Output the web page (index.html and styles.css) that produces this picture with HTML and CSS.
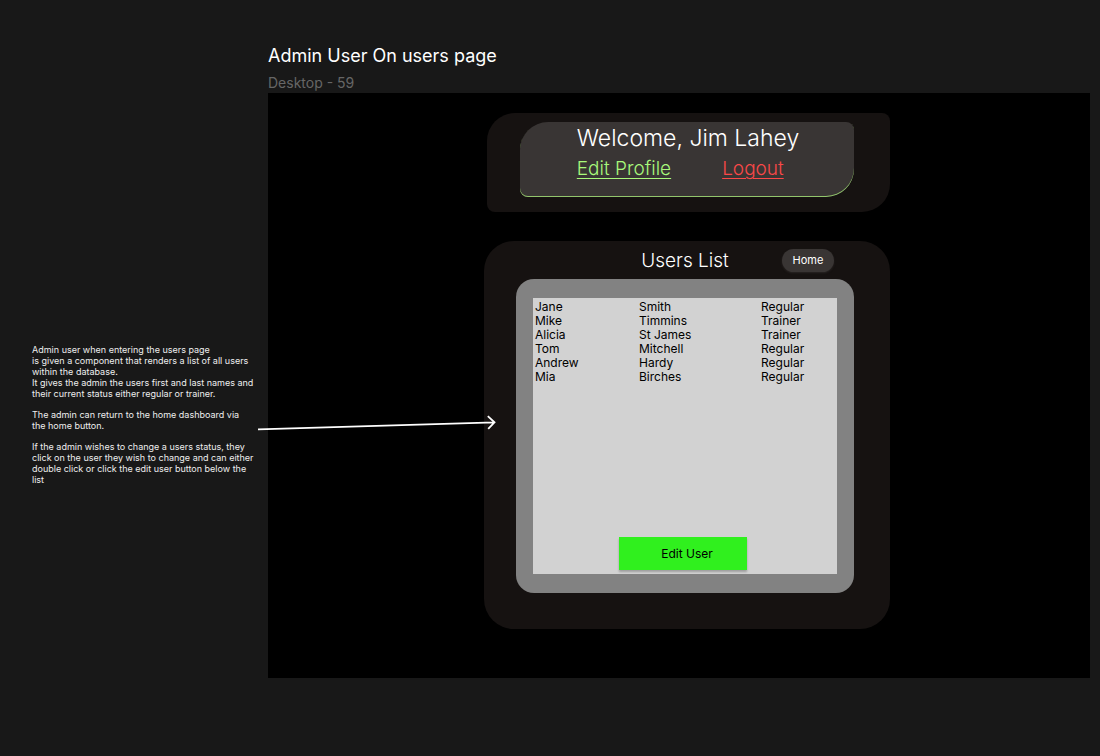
FILE: index.html
```html
<!DOCTYPE html>
<html lang="en">
<head>
<meta charset="utf-8">
<title>Admin User On users page</title>
<link rel="stylesheet" href="styles.css">
</head>
<body>
<div class="board">
  <aside class="notes">
    <p>Admin user when entering the users page<br>is given a component that renders a list of all users within the database.<br>It gives the admin the users first and last names and their current status either regular or trainer.</p>
    <p>The admin can return to the home dashboard via<br>the home button.</p>
    <p>If the admin wishes to change a users status, they click on the user they wish to change and can either double click or click the edit user button below the list</p>
  </aside>
  <main class="artboard">
    <h1 class="title">Admin User On users page</h1>
    <p class="frame-name">Desktop - 59</p>
    <div class="frame">
      <div class="stack">
        <header class="welcome">
          <div class="welcome-card">
            <div class="welcome-text">
              <h2 class="greeting">Welcome, Jim Lahey</h2>
              <nav class="links">
                <a class="link edit" href="#profile">Edit Profile</a>
                <a class="link logout" href="#logout">Logout</a>
              </nav>
            </div>
          </div>
        </header>
        <section class="panel">
          <div class="panel-head">
            <h2 class="panel-title">Users List</h2>
            <button class="home" type="button">Home</button>
          </div>
          <div class="list-border">
            <div class="list">
              <table class="users">
                <tbody>
                  <tr><td class="first">Jane</td><td class="last">Smith</td><td>Regular</td></tr>
                  <tr><td>Mike</td><td>Timmins</td><td>Trainer</td></tr>
                  <tr><td>Alicia</td><td>St James</td><td>Trainer</td></tr>
                  <tr><td>Tom</td><td>Mitchell</td><td>Regular</td></tr>
                  <tr><td>Andrew</td><td>Hardy</td><td>Regular</td></tr>
                  <tr><td>Mia</td><td>Birches</td><td>Regular</td></tr>
                </tbody>
              </table>
              <button class="edit-user" type="button">Edit User</button>
            </div>
          </div>
        </section>
      </div>
      <svg class="arrow" width="240" height="20" viewBox="0 0 240 20" fill="none" stroke="#fff" stroke-width="1.8" aria-hidden="true">
        <path d="M0 14.3L236.5 7.3M229.8 1.2L236.5 7.3L230.2 13.8"/>
      </svg>
    </div>
  </main>
</div>
</body>
</html>
```

FILE: styles.css
```css
* {
  box-sizing: border-box;
}

body {
  margin: 0;
  background: #181818;
  color: #fff;
  font-family: Inter, "Liberation Sans", sans-serif;
}

h1, h2, p {
  margin: 0;
  font-weight: 400;
}

button {
  border: 0;
  padding: 0;
  font: inherit;
  font-size: 12px;
}

.board {
  display: grid;
  grid-template-columns: 268px 1fr;
  min-height: 100vh;
  padding-right: 10px;
}

.notes {
  display: flex;
  flex-direction: column;
  gap: 10px;
  padding: 344px 8px 0 32px;
  color: #eee;
  font-size: 9px;
  line-height: 11px;
}

.artboard {
  padding: 44px 0 78px;
}

.title {
  font-size: 18px;
  line-height: 23px;
}

.frame-name {
  margin-top: 6px;
  color: #666;
  font-size: 14px;
  line-height: 20px;
}

.frame {
  position: relative;
  display: flex;
  justify-content: center;
  padding: 20px 0 49px 16px;
  background: #000;
}

.stack {
  display: flex;
  flex-direction: column;
  gap: 29px;
  width: 406px;
}

.welcome {
  margin-left: 3px;
  padding: 9px 36px 15px 33px;
  border-radius: 28px 8px;
  background: #161211;
}

.welcome-card {
  display: flex;
  justify-content: center;
  padding: 2px 0 16px 2px;
  border-radius: 28px 8px;
  background: #393534;
  box-shadow: inset 0 -1px 0 #92c66c;
}

.greeting {
  font-size: 23px;
  font-weight: 300;
  line-height: 29px;
}

.links {
  display: flex;
  gap: 51px;
  margin-top: 4px;
}

.link {
  font-size: 19px;
  font-weight: 300;
  line-height: 24px;
  text-decoration-thickness: 1px;
  text-underline-offset: 3px;
}

.edit {
  color: #a8f97b;
}

.logout {
  color: #fa4848;
}

.panel {
  padding: 8px 36px 36px 32px;
  border-radius: 30px;
  background: #161211;
}

.panel-head {
  display: grid;
  grid-template-columns: 1fr auto 1fr;
  align-items: center;
  margin-bottom: 7px;
}

.panel-title {
  grid-column: 2;
  font-size: 19px;
  font-weight: 300;
  line-height: 23px;
}

.home {
  justify-self: end;
  width: 52px;
  height: 23px;
  margin-right: 20px;
  padding-bottom: 2px;
  border-radius: 12px;
  background: #393534;
  box-shadow: 0 1px 2px #292524;
  color: #fff;
  font-size: 11px;
}

.list-border {
  padding: 19px 17px;
  border-radius: 18px;
  background: #828282;
}

.list {
  display: flex;
  flex-direction: column;
  justify-content: space-between;
  align-items: center;
  min-height: 276px;
  padding: 2px 2px 4px;
  background: #d2d2d2;
  color: #000;
}

.users {
  width: 100%;
  border-collapse: collapse;
  table-layout: fixed;
  font-size: 12px;
  line-height: 14px;
}

.users td {
  padding: 0;
}

.users .first {
  width: 104px;
}

.users .last {
  width: 122px;
}

.edit-user {
  width: 128px;
  height: 33px;
  margin-right: 4px;
  padding-left: 8px;
  background: #30f01e;
  box-shadow: 0 2px 2px rgba(0, 0, 0, 0.25);
  color: #000;
}

.arrow {
  position: absolute;
  top: 322px;
  left: -10px;
}
```
